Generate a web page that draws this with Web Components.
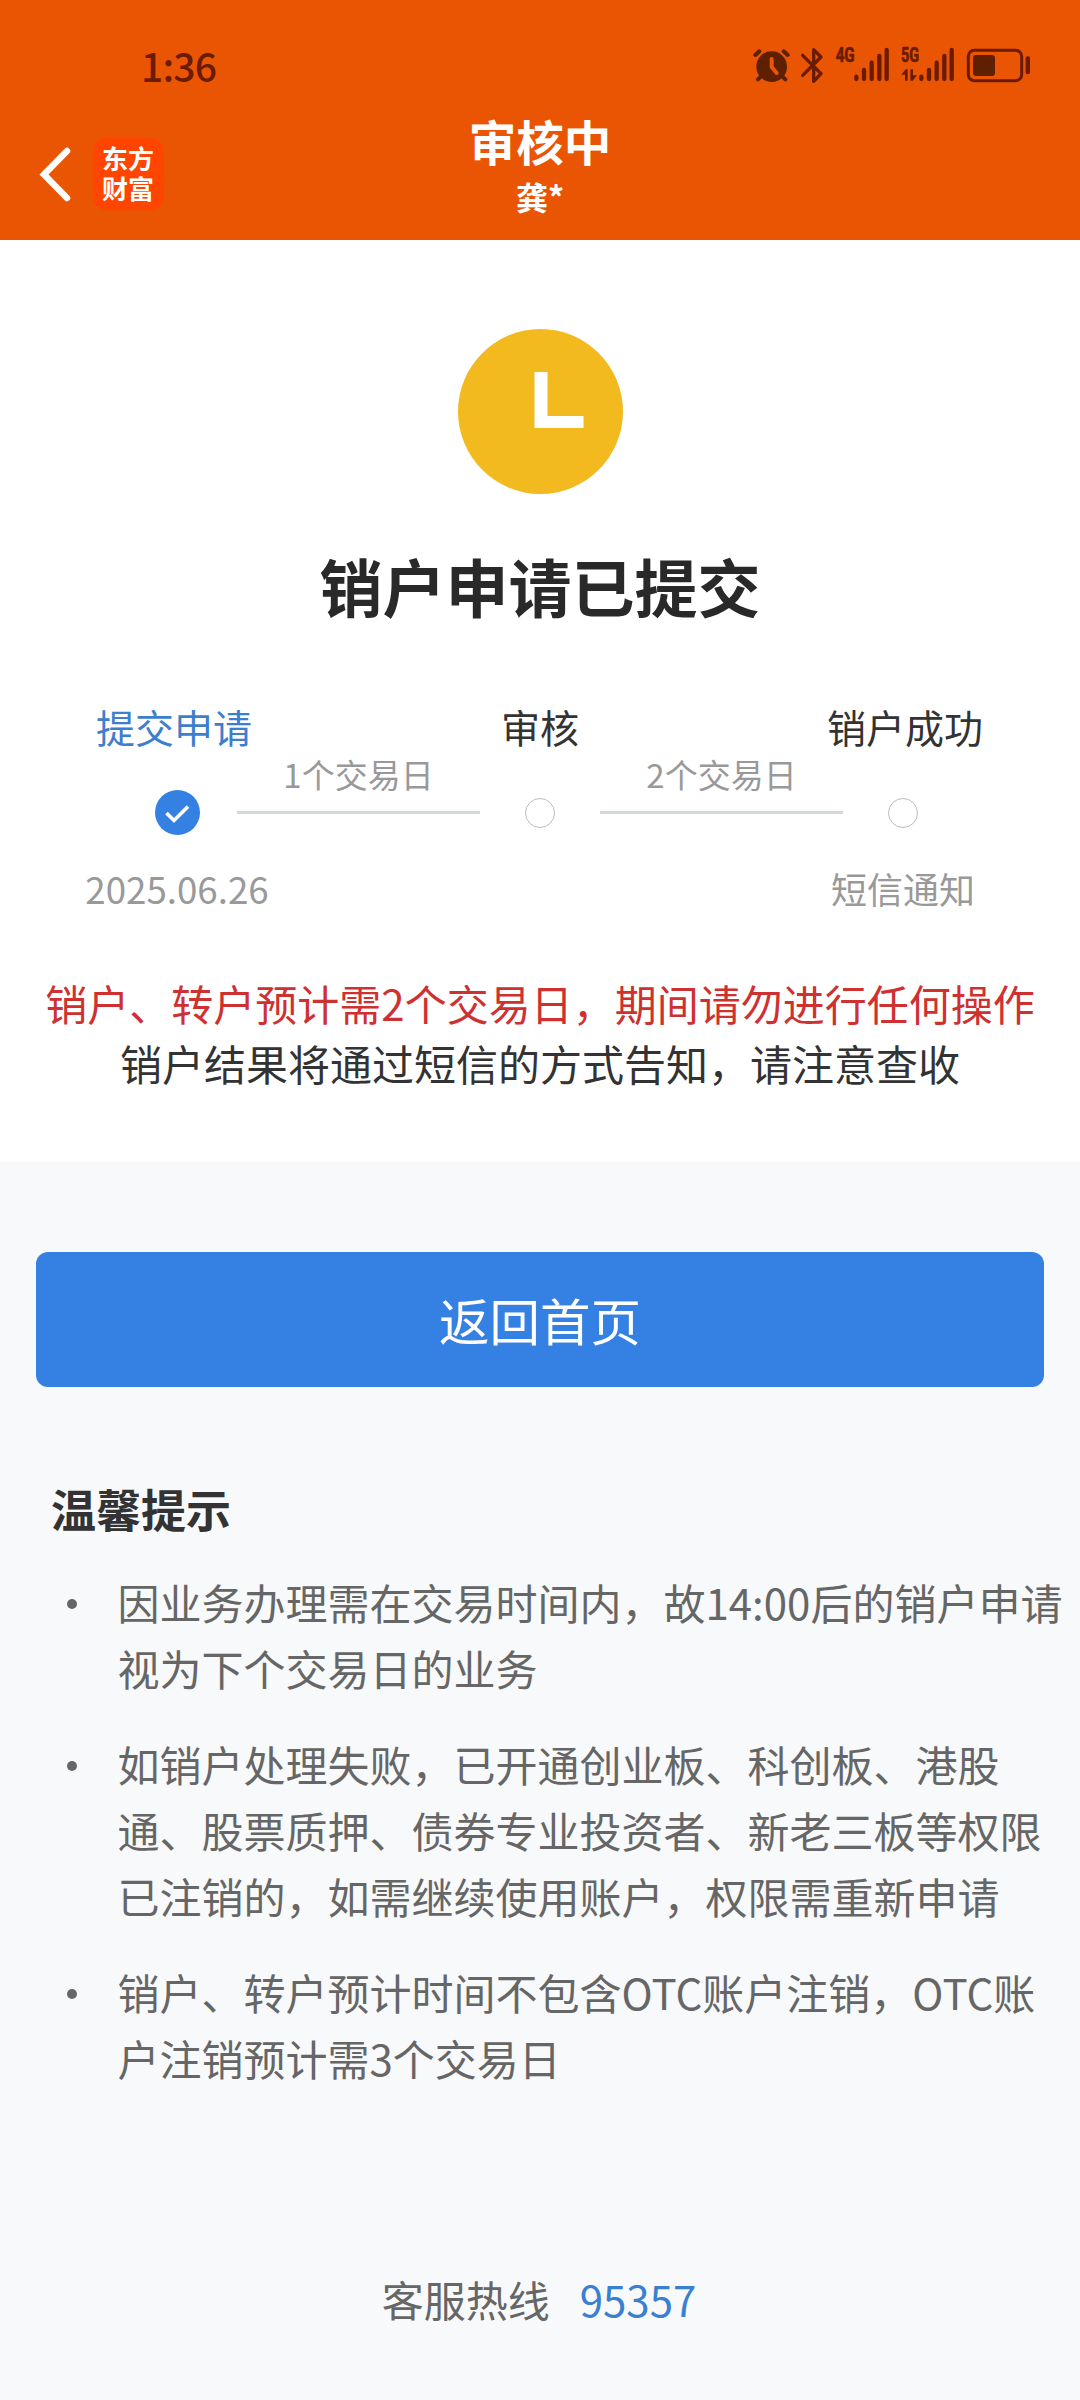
<!DOCTYPE html>
<html lang="zh-CN">
<head>
<meta charset="utf-8">
<title>审核中</title>
<style>
html,body{margin:0;padding:0}
body{width:1080px;height:2400px;background:#f7f9fb;font-family:"Noto Sans CJK SC",sans-serif;color:#333;text-spacing-trim:space-all;overflow:hidden}
</style>
</head>
<body>
<account-page></account-page>
<script>
const define = (name, html) => customElements.define(name, class extends HTMLElement {
  constructor() {
    super();
    const t = document.createElement('template');
    t.innerHTML = html;
    this.attachShadow({ mode: 'open' }).appendChild(t.content.cloneNode(true));
  }
});

define('status-bar', `
<style>
:host{display:flex;height:100px;box-sizing:border-box;padding:30px 30px 0 141px;justify-content:space-between;color:#6b1c00}
.time{font-size:39px;line-height:70px;font-weight:500;letter-spacing:-0.8px}
svg{display:block;width:310px;height:70px}
.t{font:700 59px "Roboto",sans-serif;fill:#6b1c00;stroke:#6b1c00;stroke-width:2}
</style>
<span class="time">1:36</span>
<svg viewBox="0 0 930 210">
  <g fill="#5e2000">
    <circle cx="95" cy="110" r="46"/>
    <g stroke="#5e2000" stroke-width="12" stroke-linecap="round">
      <path d="M46 75L58 64M143 75L131 64M62 140L54 148M128 140L136 148" fill="none"/>
    </g>
    <path d="M95 87V111L110 129" fill="none" stroke="#ea5504" stroke-width="12" stroke-linecap="round" stroke-linejoin="round"/>
  </g>
  <path d="M188 76L243 131L221 154V59L243 81L188 136" fill="none" stroke="#6b1c00" stroke-width="10" stroke-linecap="round" stroke-linejoin="round"/>
  <text class="t" x="287" y="97" textLength="57" lengthAdjust="spacingAndGlyphs">4G</text>
  <text class="t" x="483" y="97" textLength="54" lengthAdjust="spacingAndGlyphs">5G</text>
  <g stroke="#6b1c00" stroke-width="13" stroke-linecap="round">
    <path d="M349 140V147M372 120V147M395 98V147M418 78V147M440 60V147"/>
    <path d="M544 140V147M567 120V147M590 98V147M613 78V147M635 60V147"/>
  </g>
  <path d="M484 134L497 118H503V152H495V134ZM511 118H519V136H531L518 152H511Z" fill="#6b1c00"/>
  <rect x="685" y="61" width="160" height="91" rx="18" fill="none" stroke="#6b1c00" stroke-width="9"/>
  <rect x="699" y="75" width="66" height="63" rx="9" fill="#5e2000"/>
  <rect x="857" y="79" width="13" height="54" rx="6" fill="#6b1c00"/>
</svg>`);

define('app-logo', `
<style>
:host{display:flex;align-items:center;justify-content:center;width:71px;height:72px;border-radius:14px;background:#ff4500;color:#fff;font-weight:700;font-size:26px;line-height:30px}
span{display:block;width:54px;margin:-3px 0 0 1px;word-break:break-all}
</style>
<span>东方财富</span>`);

define('nav-bar', `
<style>
:host{display:grid;grid-template-columns:1fr auto 1fr;height:140px;color:#fff}
.left{display:flex;align-items:flex-start;padding:38px 0 0 36px;gap:18px}
svg{display:block;width:39px;height:72px}
.mid{padding-top:13px;text-align:center;font-weight:700}
.title{font-size:47.5px;line-height:56px}
.sub{font-size:32px;line-height:40px;margin-top:7px}
</style>
<div class="left">
  <svg viewBox="0 0 39 72"><path d="M31 13L8 36.5L31 60" fill="none" stroke="#fff" stroke-width="6.500" stroke-linecap="round" stroke-linejoin="miter"/></svg>
  <app-logo></app-logo>
</div>
<div class="mid"><div class="title"><slot></slot></div><div class="sub"><slot name="sub"></slot></div></div>
<div></div>`);

define('clock-badge', `
<style>:host{display:block;width:165px;height:165px}svg{display:block}</style>
<svg width="165" height="165" viewBox="0 0 165 165"><circle cx="82.5" cy="82.5" r="82.5" fill="#f2ba1e"/><path d="M76.5 43H89.5V87H125.500V99H76.5Z" fill="#fff"/></svg>`);

define('progress-step', `
<style>
:host{display:flex;flex-direction:column;align-items:center;width:120px;white-space:nowrap;color:#333}
:host([done]){color:#3d7fcc}
.label{font-size:39px;line-height:40px}
:host([done]) .label{padding-right:6px}
:host([last]) .label{padding-left:4px}
.node{display:flex;align-items:center;justify-content:center;height:46px;margin:43.5px 0 34.5px}
.ring{box-sizing:border-box;width:30px;height:30px;border:1px solid #bdbdbd;border-radius:50%}
.check{display:none}
:host([done]) .ring{display:none}
:host([done]) .check{display:block}
.note{font-size:36px;line-height:36px;height:36px;color:#999}
:host([done]) .note{font-size:36.700px}
</style>
<div class="label"><slot></slot></div>
<div class="node"><div class="ring"></div>
<svg class="check" width="45" height="45" viewBox="0 0 45 45"><circle cx="22.5" cy="22.5" r="22.5" fill="#3481e3"/><path d="M11.500 23L19 30.500L33 16.500" fill="none" stroke="#fff" stroke-width="3.600"/></svg></div>
<div class="note"><slot name="note"></slot></div>`);

define('step-link', `
<style>
:host{display:flex;flex-direction:column;padding-top:51px;color:#999;font-size:33px;line-height:34px;text-align:center}
i{display:block;height:3px;margin-top:20px;background:#d3d8d8}
</style>
<slot></slot><i></i>`);

define('progress-steps', `
<style>:host{display:grid;grid-template-columns:120px 243px 120px 243px 120px;justify-content:center}</style>
<slot></slot>`);

define('result-panel', `
<style>
:host{display:flex;flex-direction:column;align-items:center;box-sizing:border-box;height:922px;padding-top:89px;background:#fff}
h1{margin:59px 0 89px;font-size:63px;line-height:64px;font-weight:700;color:#292929}
.notice{margin-top:67px;font-size:42px;line-height:60px;text-align:center;white-space:nowrap}
.warn{color:#cf3030}
</style>
<clock-badge></clock-badge>
<h1>销户申请已提交</h1>
<progress-steps>
  <progress-step done>提交申请<span slot="note">2025.06.26</span></progress-step>
  <step-link>1个交易日</step-link>
  <progress-step>审核</progress-step>
  <step-link>2个交易日</step-link>
  <progress-step last>销户成功<span slot="note">短信通知</span></progress-step>
</progress-steps>
<div class="notice"><div class="warn">销户、转户预计需2个交易日，期间请勿进行任何操作</div><div>销户结果将通过短信的方式告知，请注意查收</div></div>`);

define('primary-button', `
<style>
:host{display:block;margin:90px 36px 0}
button{display:block;width:100%;height:135px;padding:0 0 1px;border:0;border-radius:12px;background:#3481e3;color:#fff;font:400 50.500px/60px "Noto Sans CJK SC",sans-serif}
</style>
<button><slot></slot></button>`);

define('tip-item', `
<style>
:host{display:flex;font-size:42px;line-height:66px;color:#666}
i{flex:none;width:10px;height:10px;margin:30px 40.500px 0 67px;border-radius:50%;background:#666}
p{margin:0;width:952px}
</style>
<i></i><p><slot></slot></p>`);

define('tips-list', `
<style>
:host{display:flex;flex-direction:column;gap:30px;margin-top:91.500px}
h2{margin:0 0 0 51px;font-size:45px;line-height:60px;font-weight:700;color:#333}
</style>
<h2><slot name="title"></slot></h2><slot></slot>`);

define('service-hotline', `
<style>
:host{display:flex;justify-content:center;gap:30px;margin:178px 2px 0 0;font-size:42px;line-height:60px;color:#666}
a{color:#3b7fd0;text-decoration:none}
</style>
<span>客服热线</span><a>95357</a>`);

define('account-page', `
<style>:host{display:block;width:1080px;height:2400px}header{height:240px;background:#ea5504}</style>
<header><status-bar></status-bar><nav-bar>审核中<span slot="sub">龚*</span></nav-bar></header>
<result-panel></result-panel>
<primary-button>返回首页</primary-button>
<tips-list><span slot="title">温馨提示</span>
<tip-item>因业务办理需在交易时间内，故14:00后的销户申请视为下个交易日的业务</tip-item>
<tip-item>如销户处理失败，已开通创业板、科创板、港股通、股票质押、债券专业投资者、新老三板等权限已注销的，如需继续使用账户，权限需重新申请</tip-item>
<tip-item>销户、转户预计时间不包含OTC账户注销，OTC账户注销预计需3个交易日</tip-item>
</tips-list>
<service-hotline></service-hotline>`);
</script>
</body>
</html>
